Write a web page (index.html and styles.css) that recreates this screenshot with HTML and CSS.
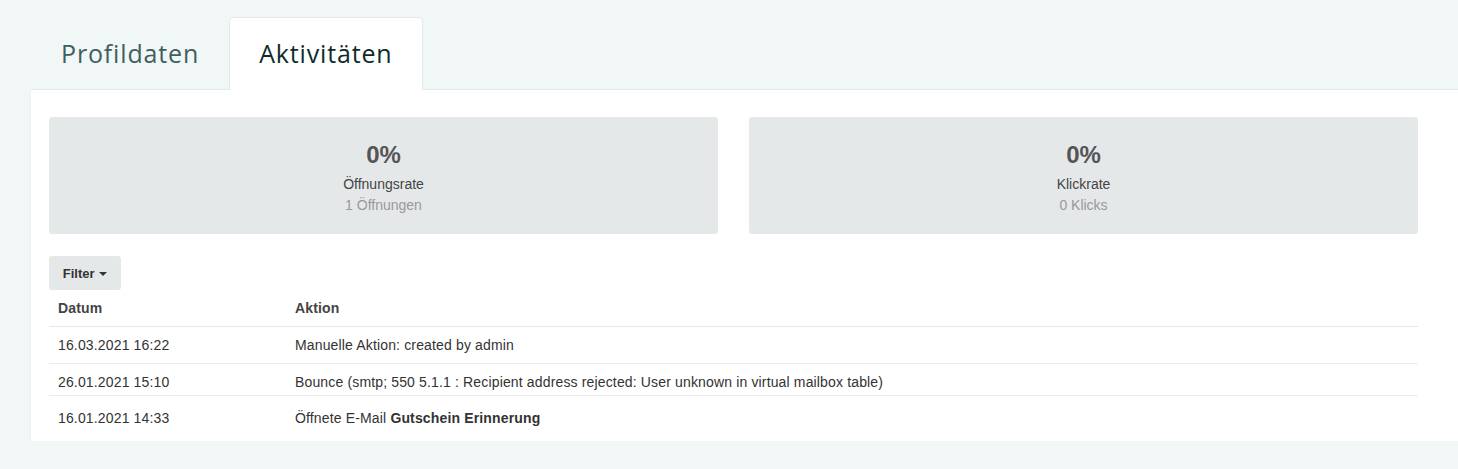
FILE: index.html
```html
<!DOCTYPE html>
<html lang="de">
<head>
<meta charset="utf-8">
<title>Aktivitäten</title>
<link rel="stylesheet" href="styles.css">
</head>
<body>
<div class="page">
  <div class="tabs">
    <div class="tab">Profildaten</div>
    <div class="tab active">Aktivitäten</div>
  </div>
  <div class="panel">
    <div class="stats">
      <div class="stat">
        <div class="stat-value">0%</div>
        <div class="stat-label">Öffnungsrate</div>
        <div class="stat-sub">1 Öffnungen</div>
      </div>
      <div class="stat">
        <div class="stat-value">0%</div>
        <div class="stat-label">Klickrate</div>
        <div class="stat-sub">0 Klicks</div>
      </div>
    </div>
    <button class="filter">Filter <span class="caret"></span></button>
    <table class="log">
      <thead>
        <tr><th class="col-date">Datum</th><th>Aktion</th></tr>
      </thead>
      <tbody>
        <tr><td>16.03.2021 16:22</td><td>Manuelle Aktion: created by admin</td></tr>
        <tr class="row-tight"><td>26.01.2021 15:10</td><td>Bounce (smtp; 550 5.1.1 : Recipient address rejected: User unknown in virtual mailbox table)</td></tr>
        <tr class="row-last"><td>16.01.2021 14:33</td><td>Öffnete E-Mail <strong>Gutschein Erinnerung</strong></td></tr>
      </tbody>
    </table>
  </div>
</div>
</body>
</html>
```
FILE: styles.css
```css
html, body {
  margin: 0;
  padding: 0;
  background: #f1f6f6;
  overflow: hidden;
}
body {
  font-family: "Liberation Sans", Arial, sans-serif;
  color: #333;
}
.page {
  padding: 17px 0 0 31px;
}
.tabs {
  display: flex;
  height: 72px;
}
.tab {
  box-sizing: border-box;
  height: 73px;
  padding: 0 29px 2px;
  display: flex;
  align-items: center;
  font-family: "Open Sans", sans-serif;
  font-size: 25px;
  font-weight: 500;
  color: #3f5f5f;
  border: 1px solid transparent;
  border-bottom: none;
  border-radius: 5px 5px 0 0;
  letter-spacing: 0.85px;
}
.tab.active {
  background: #fff;
  color: #0e2b2b;
  border-color: #e2eaea;
  position: relative;
  z-index: 1;
}
.panel {
  width: 1460px;
  background: #fff;
  border-top: 1px solid #e2eaea;
  padding: 27px 18px 1px;
  box-shadow: 0 2px 3px rgba(0, 0, 0, 0.06);
}
.stats {
  display: flex;
  gap: 31px;
  width: 1369px;
}
.stat {
  flex: 1;
  height: 117px;
  box-sizing: border-box;
  background: #e4e8e9;
  border-radius: 3px;
  padding-top: 24px;
  text-align: center;
}
.stat-value {
  font-size: 24px;
  font-weight: bold;
  line-height: 28px;
  color: #555;
}
.stat-label {
  font-size: 14px;
  line-height: 20px;
  margin-top: 5px;
  color: #444;
}
.stat-sub {
  font-size: 14px;
  line-height: 20px;
  margin-top: 1px;
  color: #999;
}
.filter {
  display: block;
  margin-top: 22px;
  width: 72px;
  height: 34px;
  background: #e4e8e9;
  border: none;
  border-radius: 3px;
  font-family: "Liberation Sans", Arial, sans-serif;
  font-size: 13px;
  font-weight: bold;
  color: #333;
  padding: 0;
  text-align: center;
}
.caret {
  display: inline-block;
  width: 0;
  height: 0;
  border-left: 4px solid transparent;
  border-right: 4px solid transparent;
  border-top: 4px solid #333;
  vertical-align: middle;
  margin-left: 1px;
}
.log {
  width: 1369px;
  border-collapse: collapse;
  font-size: 14px;
  letter-spacing: 0.15px;
}
.log th, .log td {
  text-align: left;
  padding: 8px 9px;
  line-height: 20px;
}
.log th {
  font-weight: bold;
  color: #444;
  border-bottom: 1px solid #e6e6e6;
}
.col-date {
  width: 219px;
}
.log tbody tr {
  border-bottom: 1px solid #ececec;
}
.log tbody tr.row-tight td {
  padding-bottom: 3px;
}
.log tbody tr.row-last {
  border-bottom: none;
}
.log tbody tr.row-last td {
  padding-top: 12px;
  padding-bottom: 12px;
}
```
